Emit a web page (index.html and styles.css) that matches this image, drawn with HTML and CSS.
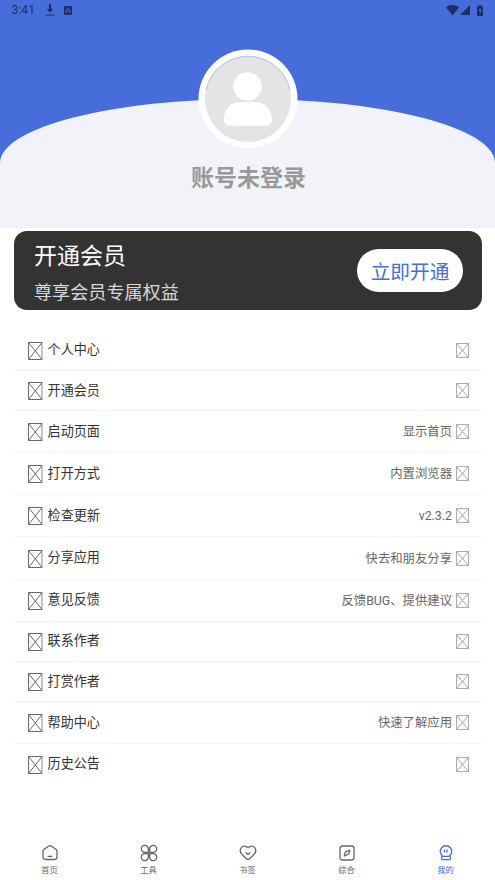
FILE: index.html
```html
<!DOCTYPE html>
<html lang="zh-CN">
<head>
<meta charset="utf-8">
<title>我的</title>
<link rel="stylesheet" href="styles.css">
</head>
<body>
<svg class="defs" width="0" height="0">
  <symbol id="box" viewBox="0 0 15 18" preserveAspectRatio="none"><path d="M.5.5h14v17H.5zL14.5 17.5M14.5.5L.5 17.5" fill="none" stroke="currentColor" vector-effect="non-scaling-stroke"/></symbol>
</svg>
<header class="hero">
  <div class="status">
    <span class="time">3:41</span>
    <svg class="download" width="10" height="12" viewBox="0 0 10 12"><path d="M4 0h2v5h2.3L5 8.500 1.700 5H4zM.5 10.500h9v1H.5z" fill="currentColor"/></svg>
    <svg class="app" width="8" height="9" viewBox="0 0 8 9"><rect width="8" height="9" rx="1" fill="currentColor"/><path d="M2.200 6.800V4.200L4 2.200l1.800 2v2.600M2.200 5.200h3.600" fill="none" stroke="#466dd9" stroke-width=".9"/></svg>
    <svg class="wifi" width="13" height="11" viewBox="0 0 13 11"><path d="M0 2.500C3.700-.8 9.300-.8 13 2.500L6.500 10.500z" fill="currentColor"/></svg>
    <svg class="signal" width="10" height="10" viewBox="0 0 10 10"><path d="M10 0v10H0z" fill="currentColor"/></svg>
    <svg class="battery" width="6" height="11" viewBox="0 0 6 11"><path d="M2 0h2v1h2v10H0V1h2z" fill="currentColor"/><path d="M3.500 2.500L1.500 6h1.300v3L4.700 5.200H3.500z" fill="#466dd9"/></svg>
  </div>
  <div class="dome">
    <svg class="avatar" viewBox="0 0 100 100"><circle cx="50" cy="50" r="49.500" fill="#fff"/><circle cx="50" cy="50" r="43" fill="#e4e4e4"/><path d="M8 41A43 43 0 0 1 92 41" fill="none" stroke="#9dafdf" stroke-width=".7"/><circle cx="49.500" cy="37.500" r="14.300" fill="#fff"/><path d="M42 53h15c10 0 17 8 17 17q0 6.500-5 6.500-19 .8-38 0-5 0-5-6.500c0-9 6-17 16-17z" fill="#fff"/></svg>
    <h1>账号未登录</h1>
  </div>
</header>
<section class="vip">
  <div class="vip-text"><h2>开通会员</h2><p>尊享会员专属权益</p></div>
  <button>立即开通</button>
</section>
<main class="menu">
  <div class="row"><svg class="lead"><use href="#box"/></svg><span class="name">个人中心</span><svg class="end"><use href="#box"/></svg></div>
  <div class="row"><svg class="lead"><use href="#box"/></svg><span class="name">开通会员</span><svg class="end"><use href="#box"/></svg></div>
  <div class="row tall"><svg class="lead"><use href="#box"/></svg><span class="name">启动页面</span><span class="note">显示首页</span><svg class="end"><use href="#box"/></svg></div>
  <div class="row tall"><svg class="lead"><use href="#box"/></svg><span class="name">打开方式</span><span class="note">内置浏览器</span><svg class="end"><use href="#box"/></svg></div>
  <div class="row tall"><svg class="lead"><use href="#box"/></svg><span class="name">检查更新</span><span class="note">v2.3.2</span><svg class="end"><use href="#box"/></svg></div>
  <div class="row tall"><svg class="lead"><use href="#box"/></svg><span class="name">分享应用</span><span class="note">快去和朋友分享</span><svg class="end"><use href="#box"/></svg></div>
  <div class="row tall"><svg class="lead"><use href="#box"/></svg><span class="name">意见反馈</span><span class="note">反馈BUG、提供建议</span><svg class="end"><use href="#box"/></svg></div>
  <div class="row"><svg class="lead"><use href="#box"/></svg><span class="name">联系作者</span><svg class="end"><use href="#box"/></svg></div>
  <div class="row"><svg class="lead"><use href="#box"/></svg><span class="name">打赏作者</span><svg class="end"><use href="#box"/></svg></div>
  <div class="row tall"><svg class="lead"><use href="#box"/></svg><span class="name">帮助中心</span><span class="note">快速了解应用</span><svg class="end"><use href="#box"/></svg></div>
  <div class="row"><svg class="lead"><use href="#box"/></svg><span class="name">历史公告</span><svg class="end"><use href="#box"/></svg></div>
</main>
<nav class="tabs">
  <a><svg viewBox="0 0 18 18"><path d="M2 7.200Q2 6.200 2.800 5.500L7.500 2.200Q9 1.200 10.500 2.200L15.200 5.500Q16 6.200 16 7.200V13q0 2.500-2.500 2.500h-9Q2 15.500 2 13zM7.200 12.300h3.600"/></svg>首页</a>
  <a><svg viewBox="0 0 18 18"><path d="M8.300 8.300H5a3.500 3.500 0 1 1 3.300-3.500zM9.700 8.300H13a3.500 3.500 0 1 0-3.300-3.500zM8.300 9.700H5a3.500 3.500 0 1 0 3.300 3.500zM9.700 9.700H13a3.500 3.500 0 1 1-3.300 3.500z"/></svg>工具</a>
  <a><svg viewBox="0 0 18 18"><path d="M9 3.800C6.500 1.200 3.500 1.800 2 4 .5 6.500 1.500 9 3.200 10.700L7.800 15Q9 16 10.200 15l4.600-4.300C16.500 9 17.500 6.500 16 4 14.500 1.800 11.500 1.200 9 3.800zM7 8.800l2 1.800 2-1.800"/></svg>书签</a>
  <a><svg viewBox="0 0 18 18"><rect x="2" y="2" width="14" height="14" rx="2.500"/><path d="M11.800 6.200L10.900 9.800 6.300 12 7.200 8.200z"/></svg>综合</a>
  <a class="active"><svg viewBox="0 0 18 18"><path d="M6 12.300A5.700 5.700 0 1 1 12 12.300zM5 12.300h8q1.300 1.800 0 3.400H5q-1.300-1.600 0-3.400zM7.500 6v2M10 6v2"/></svg>我的</a>
</nav>
</body>
</html>
```
FILE: styles.css
```css
* { box-sizing: border-box; }
body {
  margin: 0;
  height: 880px;
  display: flex;
  flex-direction: column;
  overflow: hidden;
  background: #fff;
  color: #333;
  font-family: Roboto, "Noto Sans CJK SC", sans-serif;
}
h1, h2, p { margin: 0; font-weight: 400; }
svg { display: block; flex: none; }
.defs { position: absolute; }

.hero {
  height: 228px;
  flex: none;
  background: linear-gradient(#466dd9 175px, #f2f3f8 175px);
}
.status {
  height: 20px;
  padding: 0 12px 0 11.500px;
  display: flex;
  align-items: center;
  color: #202f63;
}
.time { width: 33px; font-size: 12px; letter-spacing: .1px; }
.app { margin-left: 9.500px; }
.wifi { margin-left: auto; }
.signal { margin-left: 1px; }
.battery { margin-left: 7px; }
.dome {
  height: 129px;
  margin-top: 79px;
  display: flex;
  flex-direction: column;
  align-items: center;
  background: #f2f3f8;
  border-radius: 50% 50% 0 0 / 64px 64px 0 0;
}
.avatar { width: 100px; height: 100px; margin-top: -50px; margin-left: 1px; }
.dome h1 {
  margin: 13px 0 0 2px;
  font-size: 23px;
  line-height: 34px;
  font-weight: 700;
  color: #999;
}

.vip {
  height: 79px;
  flex: none;
  margin: 3px 13px 0 14px;
  padding: 0 19px 0 20px;
  display: flex;
  justify-content: space-between;
  align-items: center;
  border-radius: 13px;
  background: #333;
}
.vip-text { height: 79px; padding-top: 8px; }
.vip h2 { font-size: 23px; line-height: 36px; color: #fff; }
.vip p { font-size: 18.100px; line-height: 28px; margin-top: 4px; color: #d9d9d9; }
.vip button {
  width: 106px;
  height: 43px;
  padding: 0;
  border: 0;
  border-radius: 22px;
  background: #fff;
  color: #466dd9;
  font: 19.700px Roboto, "Noto Sans CJK SC", sans-serif;
}

.menu { margin: 20.600px 13px 0 14px; }
.row {
  height: 40.300px;
  padding: 0 13px 0 14px;
  display: flex;
  align-items: center;
  border-bottom: 1px solid #f5f5f5;
}
.tall { height: 42.100px; }
.row:last-child { border-bottom: 0; }
.lead { width: 14.600px; height: 18px; margin: 1px 5px 0 0; color: #68686c; }
.end { width: 13px; height: 15px; margin-left: auto; color: #a5a5ab; }
.name { font-size: 13.100px; line-height: 20px; margin-top: 0; }
.note { font-size: 12.350px; line-height: 18px; margin: 1px 0 0 auto; color: #666; }
.note + .end { margin-left: 4px; }

.tabs {
  height: 40px;
  margin-top: auto;
  display: grid;
  grid-template-columns: repeat(5, 1fr);
}
.tabs a {
  display: flex;
  flex-direction: column;
  align-items: center;
  padding-top: 4px;
  font-size: 8.200px;
  line-height: 12px;
  color: #666;
}
.tabs svg {
  width: 18px;
  height: 18px;
  margin-bottom: 2px;
  fill: none;
  stroke: currentColor;
  stroke-width: 1.300;
  stroke-linecap: round;
  stroke-linejoin: round;
}
.tabs .active { color: #466dd9; }
```
